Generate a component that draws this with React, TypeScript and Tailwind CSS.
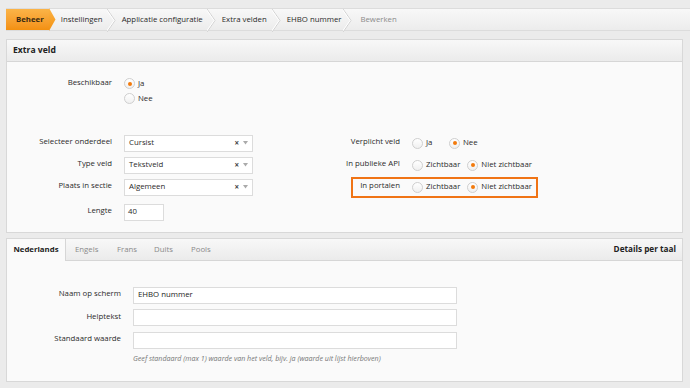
import React from "react";

const font = { fontFamily: '"Open Sans", "DejaVu Sans", sans-serif' };

function Chevron() {
  return (
    <svg width="9" height="23" viewBox="0 0 9 23" className="shrink-0">
      <polyline points="0,0 8,11.5 0,23" fill="none" stroke="#d2d2d2" strokeWidth="1" />
      <polyline points="-1,0 7,11.5 -1,23" fill="none" stroke="#ffffff" strokeWidth="1" />
    </svg>
  );
}

function Radio({ checked }: { checked?: boolean }) {
  return (
    <span className="w-[11px] h-[11px] rounded-full border border-[#cfcfcf] bg-gradient-to-b from-[#ffffff] to-[#f0f0f0] flex items-center justify-center shrink-0">
      {checked && <span className="w-[4px] h-[4px] rounded-full bg-[#f27a0c]" />}
    </span>
  );
}

function Opt({ checked, label, w }: { checked?: boolean; label: string; w?: string }) {
  return (
    <span className={`flex items-center gap-[3px] ${w ?? ""}`}>
      <Radio checked={checked} />
      <span className="text-[#2a2a2a]">{label}</span>
    </span>
  );
}

function Select({ value }: { value: string }) {
  return (
    <div className="w-[129px] h-[17px] border border-[#dcdcdc] bg-white flex items-center pl-[4px] pr-[4px]">
      <span className="flex-1 text-[#2a2a2a]">{value}</span>
      <span className="text-[8px] font-bold text-[#444] leading-none mr-[4px]">×</span>
      <svg width="5" height="4" viewBox="0 0 5 4">
        <polygon points="0,0 5,0 2.5,3.5" fill="#aaa" />
      </svg>
    </div>
  );
}

export default function App() {
  return (
    <div className="w-[690px] h-[388px] bg-[#ebebeb] overflow-hidden text-[7.8px] text-[#2a2a2a]" style={font}>
      {/* Breadcrumb */}
      <div className="pt-[8px] pl-[6px]">
        <div className="h-[23px] flex items-stretch bg-gradient-to-b from-[#f8f8f8] to-[#ececec] border-y border-[#dcdcdc]">
          <div className="flex items-stretch">
            <div className="bg-gradient-to-b from-[#fbb447] to-[#f3900f] pl-[10px] pr-[5px] flex items-center font-bold text-[#3a2a10]">
              Beheer
            </div>
            <svg width="7" height="23" viewBox="0 0 7 23" className="shrink-0 -my-px" preserveAspectRatio="none">
              <defs>
                <linearGradient id="og" x1="0" y1="0" x2="0" y2="1">
                  <stop offset="0" stopColor="#fbb447" />
                  <stop offset="1" stopColor="#f3900f" />
                </linearGradient>
              </defs>
              <polygon points="0,0 6.5,11.5 0,23" fill="url(#og)" />
            </svg>
          </div>
          <div className="flex items-center pl-[5px] pr-[4px]">Instellingen</div>
          <Chevron />
          <div className="flex items-center pl-[6px] pr-[4px]">Applicatie configuratie</div>
          <Chevron />
          <div className="flex items-center pl-[6px] pr-[5px]">Extra velden</div>
          <Chevron />
          <div className="flex items-center pl-[6px] pr-[2px]">EHBO nummer</div>
          <Chevron />
          <div className="flex items-center pl-[8px] text-[#8a8a8a]">Bewerken</div>
        </div>
      </div>

      {/* Card 1 */}
      <div className="mt-[8px] ml-[6px] w-[677px] border border-[#d8d8d8] bg-[#fafafa]">
        <div className="h-[22px] bg-gradient-to-b from-[#f8f8f8] to-[#ebebeb] border-b border-[#d6d6d6] flex items-center pl-[6px] font-bold text-[8.6px] text-[#222]">
          Extra veld
        </div>
        <div className="pt-[14px] pb-[9px]">
          <div className="flex">
            <div className="w-[105px] text-right pt-[1px]">Beschikbaar</div>
            <div className="ml-[12px] flex flex-col">
              <div className="h-[15px] flex items-center"><Opt checked label="Ja" /></div>
              <div className="h-[15px] flex items-center"><Opt label="Nee" /></div>
            </div>
          </div>
          <div className="mt-[26px] grid grid-cols-[323px_1fr]">
            <div className="flex flex-col">
              <div className="h-[22px] flex items-center">
                <div className="w-[105px] text-right pb-[2px]">Selecteer onderdeel</div>
                <div className="ml-[12px]"><Select value="Cursist" /></div>
              </div>
              <div className="h-[22px] flex items-center">
                <div className="w-[105px] text-right pb-[2px]">Type veld</div>
                <div className="ml-[12px]"><Select value="Tekstveld" /></div>
              </div>
              <div className="h-[22px] flex items-center">
                <div className="w-[105px] text-right pb-[2px]">Plaats in sectie</div>
                <div className="ml-[12px]"><Select value="Algemeen" /></div>
              </div>
              <div className="h-[22px] mt-[3px] flex items-center">
                <div className="w-[105px] text-right pb-[2px]">Lengte</div>
                <div className="ml-[12px] w-[40px] h-[17px] border border-[#dcdcdc] bg-white flex items-center pl-[3px]">40</div>
              </div>
            </div>
            <div className="flex flex-col">
              <div className="h-[22px] flex items-center">
                <div className="w-[70px] text-right whitespace-nowrap pb-[2px]">Verplicht veld</div>
                <div className="ml-[12px] flex items-center">
                  <Opt label="Ja" w="w-[37px]" />
                  <Opt checked label="Nee" />
                </div>
              </div>
              <div className="h-[22px] flex items-center">
                <div className="w-[70px] text-right whitespace-nowrap pb-[2px]">In publieke API</div>
                <div className="ml-[12px] flex items-center gap-[7px]">
                  <Opt label="Zichtbaar" />
                  <Opt checked label="Niet zichtbaar" />
                </div>
              </div>
              <div className="h-[22px] flex items-center relative">
                <div className="w-[70px] text-right whitespace-nowrap pb-[2px]">In portalen</div>
                <div className="ml-[12px] flex items-center gap-[7px]">
                  <Opt label="Zichtbaar" />
                  <Opt checked label="Niet zichtbaar" />
                </div>
                <div className="absolute left-[21px] top-[1px] w-[187px] h-[21px] border-2 border-[#f07415] pointer-events-none" />
              </div>
            </div>
          </div>
        </div>
      </div>

      {/* Card 2 */}
      <div className="mt-[5px] ml-[6px] w-[677px] border border-[#d8d8d8] bg-[#fafafa]">
        <div className="h-[22px] bg-gradient-to-b from-[#f8f8f8] to-[#ebebeb] border-b border-[#d6d6d6] flex items-stretch">
          <div className="w-[59px] bg-[#fafafa] -mb-px border-r border-[#d6d6d6] flex items-center justify-center font-bold text-[#222]">
            Nederlands
          </div>
          <div className="flex items-center pl-[9px] text-[#8a8a8a]">
            <span className="w-[42px]">Engels</span>
            <span className="w-[37px]">Frans</span>
            <span className="w-[37px]">Duits</span>
            <span>Pools</span>
          </div>
          <div className="flex-1" />
          <div className="flex items-center pr-[6px] font-bold text-[8.2px] text-[#222]">Details per taal</div>
        </div>
        <div className="pt-[23px] pb-[18px]">
          {[
            ["Naam op scherm", "EHBO nummer"],
            ["Helptekst", ""],
            ["Standaard waarde", ""],
          ].map(([l, v]) => (
            <div key={l} className="h-[22.5px] flex items-center">
              <div className="w-[114px] text-right pb-[2px]">{l}</div>
              <div className="ml-[12px] w-[324px] h-[17px] border border-[#dcdcdc] bg-white flex items-center pl-[4px] text-[#222]">{v}</div>
            </div>
          ))}
          <div className="ml-[126px] mt-[1px] italic text-[7.1px] text-[#777]">
            Geef standaard (max 1) waarde van het veld, bijv. ja (waarde uit lijst hierboven)
          </div>
        </div>
      </div>
    </div>
  );
}
